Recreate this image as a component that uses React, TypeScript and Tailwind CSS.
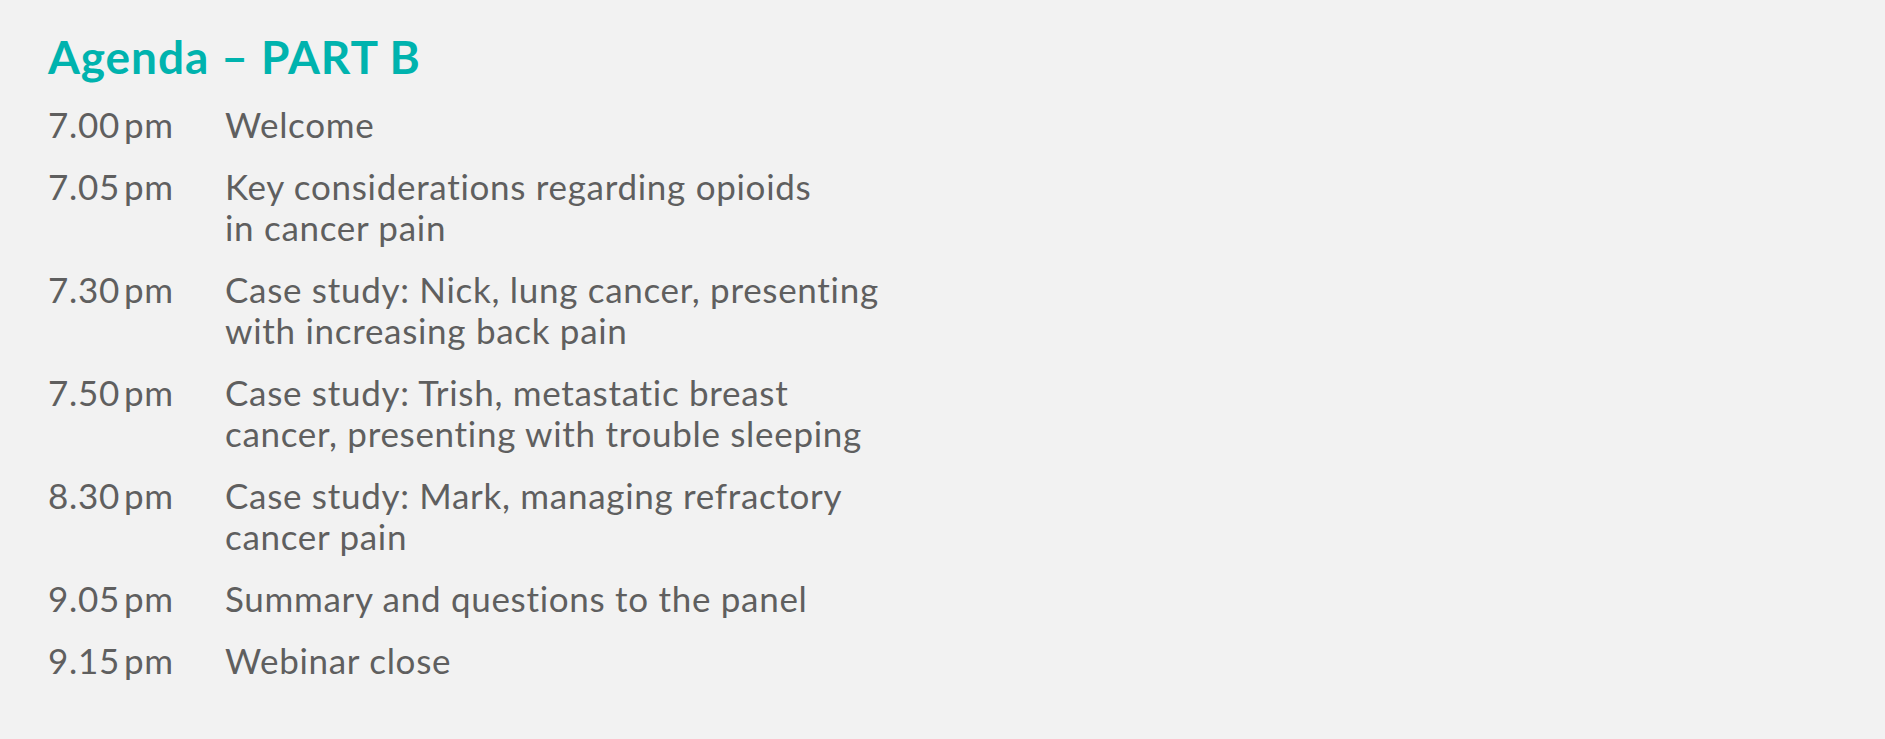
const items: { time: string; lines: string[] }[] = [
  { time: "7.00", lines: ["Welcome"] },
  { time: "7.05", lines: ["Key considerations regarding opioids", "in cancer pain"] },
  { time: "7.30", lines: ["Case study: Nick, lung cancer, presenting", "with increasing back pain"] },
  { time: "7.50", lines: ["Case study: Trish, metastatic breast", "cancer, presenting with trouble sleeping"] },
  { time: "8.30", lines: ["Case study: Mark, managing refractory", "cancer pain"] },
  { time: "9.05", lines: ["Summary and questions to the panel"] },
  { time: "9.15", lines: ["Webinar close"] },
];

export default function App() {
  return (
    <div className="min-h-screen w-full bg-[#f2f2f2] pl-[48px] pt-[34px] font-['Lato','Liberation_Sans',sans-serif] [font-variant-ligatures:none]">
      <h1 className="text-[46px] leading-[46px] font-bold tracking-[0.9px] text-[#00b3ae]">
        Agenda – PART B
      </h1>

      <div className="mt-[24px] flex flex-col gap-[21px] text-[35px] leading-[41px] tracking-[0.7px] text-[#5f5f5f]">
        {items.map((item) => (
          <div key={item.time} className="grid grid-cols-[177px_1fr]">
            <div>
              {item.time}
              <span className="ml-[4px]">pm</span>
            </div>
            <div>
              {item.lines.map((line, i) => (
                <div key={i}>{line}</div>
              ))}
            </div>
          </div>
        ))}
      </div>
    </div>
  );
}
